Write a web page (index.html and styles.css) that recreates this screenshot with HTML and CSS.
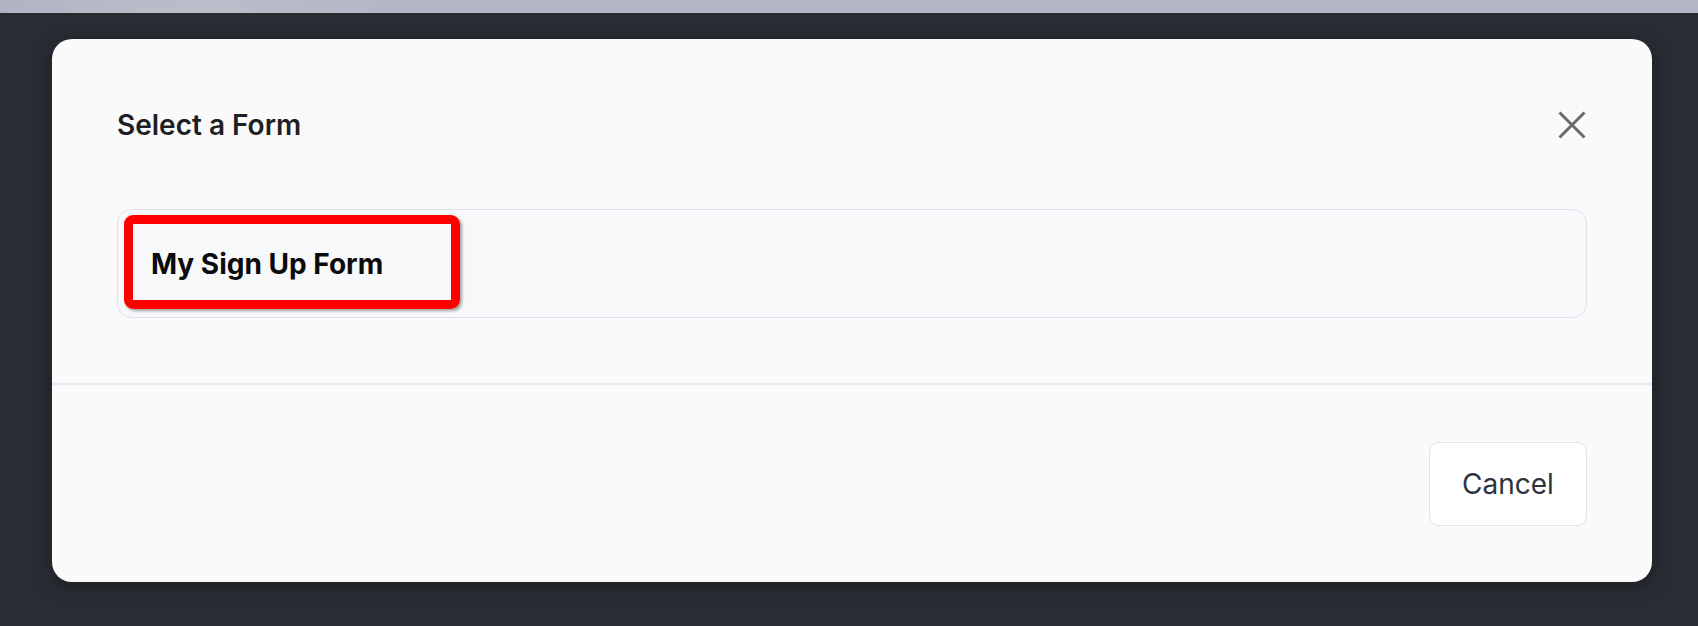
FILE: index.html
```html
<!DOCTYPE html>
<html lang="en">
<head>
<meta charset="utf-8">
<title>Select a Form</title>
<link rel="stylesheet" href="styles.css">
</head>
<body>
<div class="topbar"></div>
<div class="overlay">
  <div class="modal">
    <div class="modal-body">
      <div class="modal-header">
        <h2 class="title">Select a Form</h2>
        <button class="close" aria-label="Close">
          <svg width="28" height="28" viewBox="0 0 28 28"><path d="M1.5 1.5 L26.5 26.5 M26.5 1.5 L1.5 26.5" stroke="#6b6b6b" stroke-width="3" fill="none"/></svg>
        </button>
      </div>
      <div class="form-list">
        <div class="form-item">My Sign Up Form</div>
      </div>
    </div>
    <div class="modal-footer">
      <button class="btn-cancel">Cancel</button>
    </div>
  </div>
</div>
</body>
</html>
```

FILE: styles.css
```css
html, body {
  margin: 0;
  padding: 0;
}
body {
  width: 1698px;
  height: 626px;
  background: #292c33;
  font-family: Inter, "Noto Sans", sans-serif;
  overflow: hidden;
}
.topbar {
  height: 13px;
  background: linear-gradient(90deg, #b0b3c1 0%, #b8bbc8 8%, #b9bcc9 13%, #b2b5c3 25%, #b2b5c3 100%);
}
.overlay {
  padding: 26px 46px 0 52px;
}
.modal {
  width: 1600px;
  background: #fafafa;
  border-radius: 20px;
  box-shadow: 0 4px 18px rgba(0, 0, 0, 0.35);
}
.modal-body {
  padding: 69px 65px 65px 65px;
  border-bottom: 2px solid #e6e8f1;
}
.modal-header {
  display: flex;
  justify-content: space-between;
  align-items: center;
  margin-bottom: 67px;
}
.title {
  margin: 0;
  font-size: 28px;
  line-height: 34px;
  font-weight: 600;
  color: #1e1f22;
}
.close {
  border: 0;
  background: none;
  padding: 0;
  width: 28px;
  height: 28px;
  display: flex;
  margin-right: 1px;
}
.form-list {
  border: 1px solid #dfe2ed;
  border-radius: 14px;
  background: #f7f8fa;
  padding: 5px 6px 8px;
}
.form-item {
  box-sizing: border-box;
  width: 336px;
  height: 94px;
  border: 9px solid #ff0000;
  border-radius: 9px;
  box-shadow: 2px 2px 3px rgba(0, 0, 0, 0.35);
  display: flex;
  align-items: center;
  padding: 3px 0 0 18px;
  font-size: 28px;
  line-height: 34px;
  font-weight: 700;
  color: #0b0b0b;
}
.modal-footer {
  display: flex;
  justify-content: flex-end;
  padding: 57px 65px 56px;
}
.btn-cancel {
  box-sizing: border-box;
  width: 158px;
  height: 84px;
  background: #ffffff;
  border: 1px solid #e2e5ef;
  border-radius: 10px;
  font-family: Inter, "Noto Sans", sans-serif;
  font-size: 28px;
  font-weight: 400;
  color: #2e3340;
  padding: 0;
}
```
